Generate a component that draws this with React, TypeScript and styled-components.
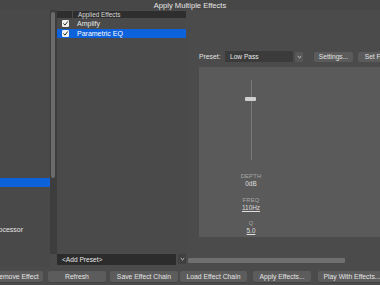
import React from "react";
import styled, { createGlobalStyle } from "styled-components";

const Global = createGlobalStyle`
  html, body { margin: 0; padding: 0; background: #4b4b4b; overflow: hidden; }
  * { box-sizing: border-box; }
`;

const Window = styled.div`
  width: 380px;
  height: 285px;
  background: #4b4b4b;
  font-family: "Liberation Sans", Arial, sans-serif;
  font-size: 7px;
  color: #e2e2e2;
  display: flex;
  flex-direction: column;
  overflow: hidden;
`;

const TitleBar = styled.div`
  height: 10px;
  line-height: 11px;
  text-align: center;
  font-size: 7.6px;
  color: #e6e6e6;
  background: #474747;
`;

const Main = styled.div`
  display: grid;
  grid-template-columns: 50px 7px 129px 1fr;
  grid-template-rows: 244px 13px;
`;

const LeftList = styled.div`
  grid-column: 1;
  grid-row: 1 / span 2;
  background: #494949;
  overflow: hidden;
  display: flex;
  flex-direction: column;
`;

const LeftRow = styled.div<{ $selected?: boolean }>`
  height: 9.33px;
  flex: none;
  line-height: 9.33px;
  white-space: nowrap;
  margin-left: -8.5px;
  color: #e4e4e4;
  background: ${(p) => (p.$selected ? "#0d62dc" : "transparent")};
`;

const ScrollTrack = styled.div`
  grid-column: 2;
  grid-row: 1;
  background: #3d3d3d;
  padding: 2px 1px 0 1px;
`;

const ScrollThumb = styled.div`
  height: 166px;
  width: 4px;
  border-radius: 2px;
  background: #6b6b6b;
`;

const MiddleList = styled.div`
  grid-column: 3;
  grid-row: 1;
  background: #4a4a4a;
  padding-top: 1px;
  display: flex;
  flex-direction: column;
`;

const HeaderRow = styled.div`
  display: flex;
  height: 7px;
  gap: 1px;
  margin-bottom: 1px;
`;

const HeaderCell = styled.div<{ $w?: number }>`
  background: #2e2e2e;
  color: #d8d8d8;
  font-size: 6.4px;
  line-height: 7.5px;
  padding-left: 5px;
  ${(p) => (p.$w ? `width: ${p.$w}px; flex: none;` : "flex: 1;")}
`;

const EffectRow = styled.div<{ $selected?: boolean }>`
  display: flex;
  align-items: center;
  height: 9.5px;
  background: ${(p) => (p.$selected ? "#0d62dc" : "transparent")};
  color: ${(p) => (p.$selected ? "#ffffff" : "#e6e6e6")};
`;

const CheckCell = styled.div`
  width: 16px;
  flex: none;
  display: flex;
  justify-content: center;
  padding-left: 1px;
`;

const EffectName = styled.span`
  padding-left: 4px;
  font-size: 7px;
`;

const RightArea = styled.div`
  grid-column: 4;
  grid-row: 1;
  background: #4b4b4b;
  padding: 41px 0 0 13px;
  display: flex;
  flex-direction: column;
`;

const PresetRow = styled.div`
  display: flex;
  align-items: center;
  height: 11px;
  margin-bottom: 5px;
`;

const PresetLabel = styled.span`
  width: 26px;
  flex: none;
  color: #e2e2e2;
  font-size: 6.8px;
`;

const PresetSelect = styled.div`
  width: 68px;
  height: 11px;
  flex: none;
  background: #3b3b3b;
  line-height: 11px;
  padding-left: 5px;
  font-size: 6.6px;
  color: #e8e8e8;
`;

const Chevron = styled.div<{ $bg?: string }>`
  width: 8px;
  height: 10px;
  flex: none;
  margin-left: 2px;
  background: ${(p) => p.$bg ?? "#575757"};
  display: flex;
  align-items: center;
  justify-content: center;
  border-radius: 1px;
`;

const SmallButton = styled.div<{ $w: number; $ml: number }>`
  width: ${(p) => p.$w}px;
  margin-left: ${(p) => p.$ml}px;
  height: 10px;
  flex: none;
  background: #5b5b5b;
  border-radius: 2px;
  text-align: center;
  line-height: 10px;
  font-size: 6.6px;
  color: #e2e2e2;
  white-space: nowrap;
  overflow: hidden;
`;

const EffectPanel = styled.div`
  height: 170px;
  margin-right: -10px;
  background: #5a5a5a;
  display: flex;
  flex-direction: column;
  align-items: center;
  padding-right: 105px;
`;

const SliderBox = styled.div`
  position: relative;
  width: 12px;
  height: 80px;
  margin-top: 13px;
  display: flex;
  justify-content: center;
`;

const SliderTrack = styled.div`
  width: 1px;
  height: 100%;
  background: #7a7a7a;
`;

const SliderThumb = styled.div`
  position: absolute;
  top: 17px;
  left: 0;
  width: 11px;
  height: 4px;
  border-radius: 1px;
  background: #cfcfcf;
`;

const ParamLabel = styled.div<{ $mt: number }>`
  margin-top: ${(p) => p.$mt}px;
  font-size: 5.8px;
  line-height: 7px;
  color: #a9a9a9;
  letter-spacing: 0.2px;
`;

const ParamValue = styled.div<{ $underline?: boolean }>`
  font-size: 6.4px;
  line-height: 8px;
  color: #dedede;
  text-decoration: ${(p) => (p.$underline ? "underline" : "none")};
`;

const AddPreset = styled.div`
  grid-column: 3;
  grid-row: 2;
  display: flex;
  align-items: flex-start;
`;

const AddPresetField = styled.div`
  width: 120px;
  height: 11px;
  background: #2c2c2c;
  line-height: 11px;
  padding-left: 5px;
  font-size: 6.6px;
  color: #e6e6e6;
`;

const ProgressArea = styled.div`
  grid-column: 4;
  grid-row: 2;
  padding: 4px 0 0 2px;
`;

const ProgressBar = styled.div`
  width: 157px;
  height: 5px;
  border-radius: 1px;
  background: #6f6f6f;
`;

const ButtonRow = styled.div`
  display: flex;
  align-items: center;
  height: 15px;
  padding-top: 3px;
  margin-left: -10px;
`;

const Button = styled.div<{ $w: number; $ml: number }>`
  width: ${(p) => p.$w}px;
  margin-left: ${(p) => p.$ml}px;
  height: 11px;
  flex: none;
  background: #5c5c5c;
  border-radius: 2px;
  box-shadow: 0 0.5px 0 #3a3a3a;
  text-align: center;
  line-height: 11px;
  font-size: 6.8px;
  color: #e4e4e4;
  white-space: nowrap;
`;

const CheckBox = () => (
  <svg width="7" height="7" viewBox="0 0 7 7">
    <rect x="0" y="0" width="7" height="7" rx="1.2" fill="#f2f2f2" />
    <path d="M1.6 3.7 L3 5.1 L5.5 1.8" stroke="#2a2a2a" strokeWidth="1" fill="none" strokeLinecap="round" strokeLinejoin="round" />
  </svg>
);

const ChevronIcon = () => (
  <svg width="5" height="4" viewBox="0 0 5 4">
    <path d="M0.8 1.2 L2.5 2.8 L4.2 1.2" stroke="#dcdcdc" strokeWidth="0.9" fill="none" />
  </svg>
);

const leftRows = Array.from({ length: 28 }, (_, i) => i);

export default function App() {
  return (
    <>
      <Global />
      <Window>
        <TitleBar>Apply Multiple Effects</TitleBar>
        <Main>
          <LeftList>
            {leftRows.map((i) => (
              <LeftRow key={i} $selected={i === 18}>
                {i === 23 ? "Processor" : ""}
              </LeftRow>
            ))}
          </LeftList>
          <ScrollTrack>
            <ScrollThumb />
          </ScrollTrack>
          <MiddleList>
            <HeaderRow>
              <HeaderCell $w={15} />
              <HeaderCell>Applied Effects</HeaderCell>
            </HeaderRow>
            <EffectRow>
              <CheckCell>
                <CheckBox />
              </CheckCell>
              <EffectName>Amplify</EffectName>
            </EffectRow>
            <EffectRow $selected>
              <CheckCell>
                <CheckBox />
              </CheckCell>
              <EffectName>Parametric EQ</EffectName>
            </EffectRow>
          </MiddleList>
          <RightArea>
            <PresetRow>
              <PresetLabel>Preset:</PresetLabel>
              <PresetSelect>Low Pass</PresetSelect>
              <Chevron>
                <ChevronIcon />
              </Chevron>
              <SmallButton $w={39} $ml={11}>Settings...</SmallButton>
              <SmallButton $w={40} $ml={5}>Set Filter</SmallButton>
            </PresetRow>
            <EffectPanel>
              <SliderBox>
                <SliderTrack />
                <SliderThumb />
              </SliderBox>
              <ParamLabel $mt={13}>DEPTH</ParamLabel>
              <ParamValue>0dB</ParamValue>
              <ParamLabel $mt={9}>FREQ</ParamLabel>
              <ParamValue $underline>110Hz</ParamValue>
              <ParamLabel $mt={8}>Q</ParamLabel>
              <ParamValue $underline>5.0</ParamValue>
            </EffectPanel>
          </RightArea>
          <AddPreset>
            <AddPresetField>&lt;Add Preset&gt;</AddPresetField>
            <Chevron $bg="#404040">
              <ChevronIcon />
            </Chevron>
          </AddPreset>
          <ProgressArea>
            <ProgressBar />
          </ProgressArea>
        </Main>
        <ButtonRow>
          <Button $w={53} $ml={0}>Remove Effect</Button>
          <Button $w={58} $ml={5}>Refresh</Button>
          <Button $w={68} $ml={4}>Save Effect Chain</Button>
          <Button $w={67} $ml={2}>Load Effect Chain</Button>
          <Button $w={58} $ml={6}>Apply Effects...</Button>
          <Button $w={68} $ml={7}>Play With Effects...</Button>
        </ButtonRow>
      </Window>
    </>
  );
}
